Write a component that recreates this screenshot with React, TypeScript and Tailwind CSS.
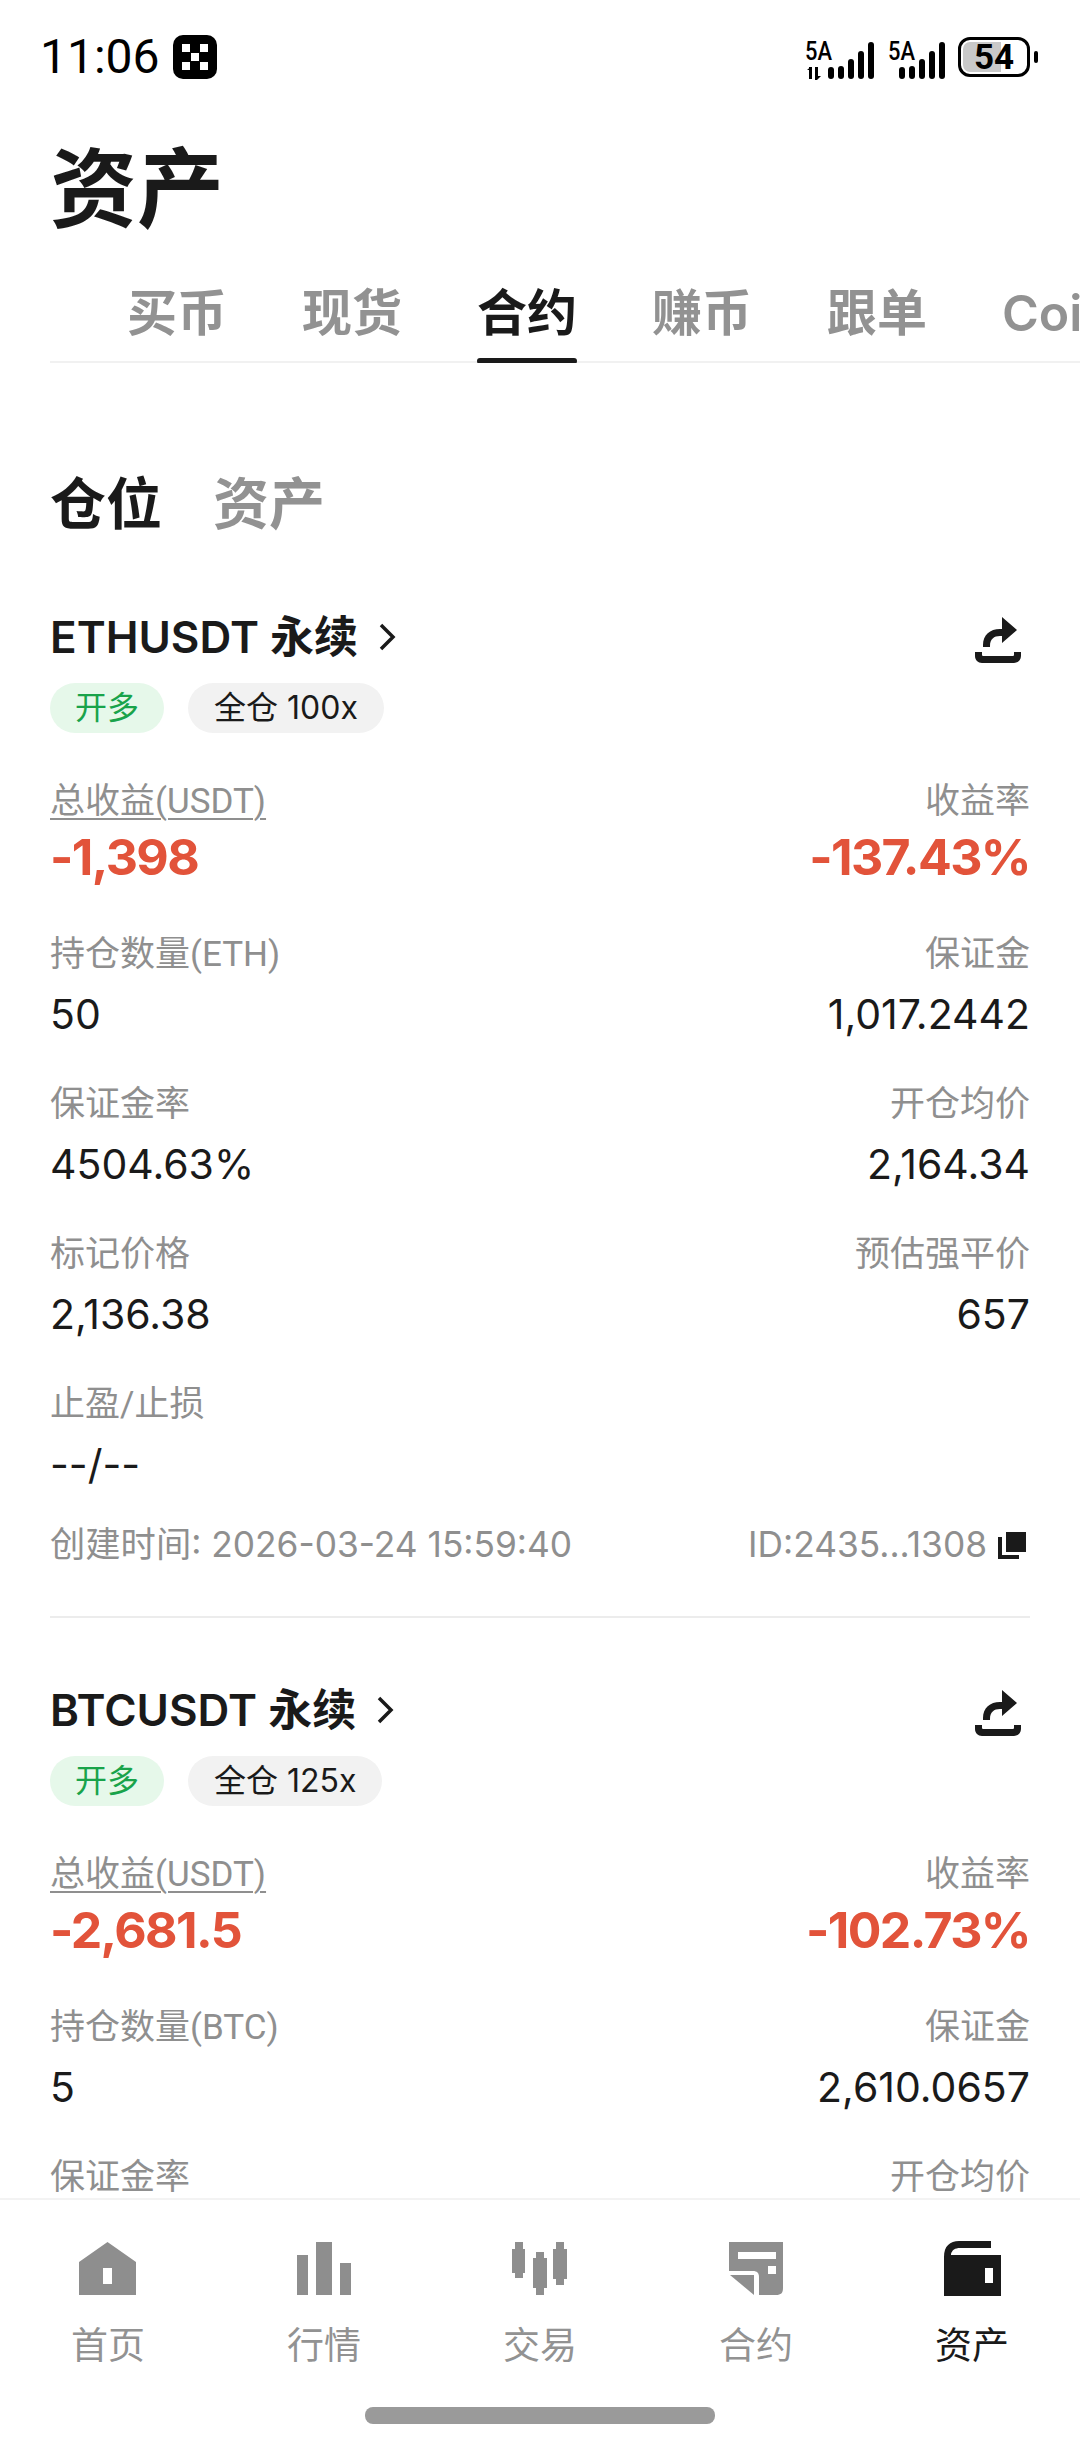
import type { ReactNode } from 'react'

const tabs = ['买币', '现货', '合约', '赚币', '跟单', 'Coin']

type Field = { left: [string, string]; right: [string, string] }

type Pos = {
  symbol: string
  lever: string
  pnl: string
  rate: string
  fields: Field[]
  last?: boolean
}

const positions: Pos[] = [
  {
    symbol: 'ETHUSDT 永续',
    lever: '全仓 100x',
    pnl: '-1,398',
    rate: '-137.43%',
    fields: [
      { left: ['持仓数量(ETH)', '50'], right: ['保证金', '1,017.2442'] },
      { left: ['保证金率', '4504.63%'], right: ['开仓均价', '2,164.34'] },
      { left: ['标记价格', '2,136.38'], right: ['预估强平价', '657'] },
      { left: ['止盈/止损', '--/--'], right: ['', ''] },
    ],
  },
  {
    symbol: 'BTCUSDT 永续',
    lever: '全仓 125x',
    pnl: '-2,681.5',
    rate: '-102.73%',
    fields: [
      { left: ['持仓数量(BTC)', '5'], right: ['保证金', '2,610.0657'] },
      { left: ['保证金率', ''], right: ['开仓均价', ''] },
    ],
    last: true,
  },
]

function Signal({ first }: { first?: boolean }) {
  const xs = first ? [26, 36, 46, 56, 66] : [14, 24, 34, 44, 54]
  const tops = [25, 24, 17, 9, 0]
  const w = first ? 72 : 60
  return (
    <svg width={w} height="46" viewBox={`0 -8 ${w} 46`} className="block">
      <text x="0" y="18" fontSize="25" fontFamily="Roboto, sans-serif" fontWeight="500" fill="#000" textLength="27" lengthAdjust="spacingAndGlyphs">
        5A
      </text>
      {first && <path d="M4 25h3v12h-3zM2 28l3.500-3v3zM10 25h3v12h-3zM10 34h6l-4 4h-2z" fill="#000" />}
      {xs.map((x, i) => (
        <rect key={x} x={x - 3} y={tops[i]} width="6" height={37 - tops[i]} rx="3" fill="#000" />
      ))}
    </svg>
  )
}

function StatusBar() {
  return (
    <div className="h-[114px] flex items-center justify-between pl-[40px] pr-[42px]">
      <div className="flex items-center gap-[13px]">
        <span className="text-[48px] leading-none text-black [font-family:Roboto,sans-serif]">11:06</span>
        <svg width="44" height="44" viewBox="0 0 44 44" className="block">
          <rect width="44" height="44" rx="10" fill="#000" />
          <g fill="#fff">
            <rect x="9" y="9" width="8" height="8" />
            <rect x="27" y="9" width="8" height="8" />
            <rect x="18" y="18" width="8" height="8" />
            <rect x="9" y="27" width="8" height="8" />
            <rect x="27" y="27" width="8" height="8" />
          </g>
        </svg>
      </div>
      <div className="flex items-center">
        <Signal first />
        <div className="ml-[11px]">
          <Signal />
        </div>
        <div className="ml-[10px] flex items-center">
          <div className="relative w-[72px] h-[40px] rounded-[12px] border-[3px] border-black overflow-hidden flex items-center justify-center">
            <div className="absolute left-[2px] top-[2px] bottom-[2px] w-[38px] bg-[#c9c9c9] rounded-l-[7px]" />
            <span className="relative text-[35px] leading-none font-bold text-black [font-family:Roboto,sans-serif]">54</span>
          </div>
          <div className="ml-[4px] w-[4px] h-[12px] rounded-full bg-black" />
        </div>
      </div>
    </div>
  )
}

function ShareIcon() {
  return (
    <svg width="56" height="56" viewBox="0 0 56 56" className="block">
      <path d="M32 0l15 13-15 13v-7h-2c-6 0-10 3-10 10v1h-7v-2c0-10 7-16 17-16h2z" fill="#1a1a1a" />
      <path d="M5 35h7v2.500c0 1 .5 1.500 1.500 1.500h29c1 0 1.500-.5 1.500-1.500V35h7v4c0 4-3 7-7 7H12c-4 0-7-3-7-7z" fill="#1a1a1a" />
    </svg>
  )
}

function CopyIcon() {
  return (
    <svg width="29" height="28" viewBox="0 0 29 28" className="block">
      <path d="M0 6h4v18h17v4H0z" fill="#1a1a1a" />
      <rect x="8" y="1" width="20" height="20" fill="#1a1a1a" />
    </svg>
  )
}

const labelCls = "h-[44px] leading-[44px] text-[35px] text-[#8f8f8f] [font-family:Roboto,'Noto_Sans_CJK_SC',sans-serif]"

function Cell({ label, value, right }: { label: string; value: string; right?: boolean }) {
  return (
    <div className={right ? 'text-right' : ''}>
      <div className={labelCls}>{label}</div>
      <div className="mt-[12px] h-[50px] leading-[50px] text-[41px] text-[#1a1a1a]">{value}</div>
    </div>
  )
}

function Position({ p }: { p: Pos }) {
  return (
    <div>
      <div className="h-[60px] flex items-center justify-between">
        <div className="flex items-center">
          <span className="text-[44px] font-semibold text-[#1a1a1a] leading-[60px]">{p.symbol}</span>
          <svg width="24" height="32" viewBox="0 0 24 32" className="block ml-[17px]">
            <path d="M6 4l12 12L6 28" fill="none" stroke="#1a1a1a" strokeWidth="3.500" />
          </svg>
        </div>
        <div className="mr-[4px] mt-[16px]">
          <ShareIcon />
        </div>
      </div>
      <div className="mt-[16px] flex gap-[24px]">
        <span className="h-[50px] w-[114px] rounded-full bg-[#e6f8ea] text-[#19a34a] text-[32px] leading-[50px] text-center">开多</span>
        <span className="h-[50px] px-[26px] rounded-full bg-[#f2f2f2] text-[#1a1a1a] text-[32px] leading-[50px]">{p.lever}</span>
      </div>
      <div className="mt-[47px] flex justify-between">
        <div>
          <div className={`${labelCls} underline underline-offset-[5px] decoration-[2px]`}>总收益(USDT)</div>
          <div className="mt-[3px] h-[60px] leading-[60px] text-[50px] tracking-[-1.6px] font-bold text-[#e2533a]">{p.pnl}</div>
        </div>
        <div className="text-right">
          <div className={labelCls}>收益率</div>
          <div className="mt-[3px] h-[60px] leading-[60px] text-[50px] tracking-[-1.6px] font-bold text-[#e2533a]">{p.rate}</div>
        </div>
      </div>
      <div className="mt-[46px] flex flex-col gap-[44px]">
        {p.fields.map((f) => (
          <div key={f.left[0]} className="flex justify-between">
            <Cell label={f.left[0]} value={f.left[1]} />
            <Cell label={f.right[0]} value={f.right[1]} right />
          </div>
        ))}
      </div>
      {!p.last && (
        <>
          <div className="mt-[34px] h-[44px] flex items-center justify-between text-[35.300px] text-[#8f8f8f]">
            <span>创建时间: 2026-03-24 15:59:40</span>
            <span className="flex items-center gap-[11px] pr-[3px]">
              ID:2435...1308
              <CopyIcon />
            </span>
          </div>
          <div className="mt-[49px] mb-[62px] h-[2px] bg-[#ececec]" />
        </>
      )}
    </div>
  )
}

function NavItem({ label, active, children }: { label: string; active?: boolean; children: ReactNode }) {
  return (
    <div className="flex flex-col items-center">
      {children}
      <span className={`mt-[24px] h-[48px] leading-[48px] text-[37px] ${active ? 'text-[#1a1a1a]' : 'text-[#929292]'}`}>{label}</span>
    </div>
  )
}

function BottomNav() {
  const g = '#8e8e8e'
  return (
    <div className="h-[246px] shrink-0 bg-white border-t-2 border-[#f3f3f3] pt-[40px]">
      <div className="grid grid-cols-5">
        <NavItem label="首页">
          <svg width="60" height="58" viewBox="0 0 60 58" className="block">
            <path fillRule="evenodd" d="M1 22L29.500 2 58 22v33H1zM25 28v16h9V28z" fill={g} />
          </svg>
        </NavItem>
        <NavItem label="行情">
          <svg width="60" height="58" viewBox="0 0 60 58" className="block">
            <path d="M3 15h11v40H3zM22 2h16v53H22zM46 23h11v32H46z" fill={g} />
          </svg>
        </NavItem>
        <NavItem label="交易">
          <svg width="60" height="58" viewBox="0 0 60 58" className="block">
            <path d="M5 2h8v7h2v24h-2v5H5v-5H2V9h3zM26 12h8v6h3v30h-3v7h-8v-7h-3V18h3zM46 2h8v7h3v30h-3v6h-8v-6h-3V9h3z" fill={g} />
          </svg>
        </NavItem>
        <NavItem label="合约">
          <svg width="60" height="58" viewBox="0 0 60 58" className="block">
            <path fillRule="evenodd" d="M3 2h54v46c0 5-2 7-7 7H33V37c0-4-2-6-6-6H3zM12 12v7h38v-7zM42 26v8h8v-8z" fill={g} />
            <path d="M4 35h24v20z" fill={g} />
          </svg>
        </NavItem>
        <NavItem label="资产" active>
          <svg width="60" height="58" viewBox="0 0 60 58" className="block">
            <path fillRule="evenodd" d="M2 56V17C2 6 8 1 17 1h32v7H18c-5 0-8 2-9 6v1h50v41zM43 28v15h8V28z" fill="#1a1a1a" />
          </svg>
        </NavItem>
      </div>
      <div className="mt-[37px] mx-auto w-[350px] h-[17px] rounded-[8px] bg-[#9a9a9a]" />
    </div>
  )
}

export default function App() {
  return (
    <div className="w-[1080px] h-[2444px] overflow-hidden flex flex-col bg-white [font-family:Inter,'Noto_Sans_CJK_SC',sans-serif]">
      <div className="flex-1 min-h-0 overflow-hidden">
        <StatusBar />
        <div className="mt-[26px] pl-[50px] h-[100px] leading-[100px] text-[87px] font-bold text-[#1a1a1a]">资产</div>
        <div className="mt-[43px] ml-[50px] h-[80px] border-b-2 border-[#f1f1f1]">
          <div className="flex gap-[75px] pl-[77px] overflow-hidden">
            {tabs.map((t) => (
              <div key={t} className="relative shrink-0 h-[80px]">
                <span className={`block h-[60px] leading-[60px] text-[50px] font-semibold ${t === '合约' ? 'text-[#1a1a1a]' : 'text-[#929292]'}`}>{t}</span>
                {t === '合约' && <div className="absolute left-0 right-0 top-[75px] h-[6px] rounded-full bg-[#1a1a1a]" />}
              </div>
            ))}
          </div>
        </div>
        <div className="mt-[106px] pl-[50px] flex gap-[51px] h-[70px] leading-[70px] text-[56px] font-semibold">
          <span className="text-[#1a1a1a]">仓位</span>
          <span className="text-[#929292]">资产</span>
        </div>
        <div className="mt-[68px] px-[50px]">
          {positions.map((p) => (
            <Position key={p.symbol} p={p} />
          ))}
        </div>
      </div>
      <BottomNav />
    </div>
  )
}
